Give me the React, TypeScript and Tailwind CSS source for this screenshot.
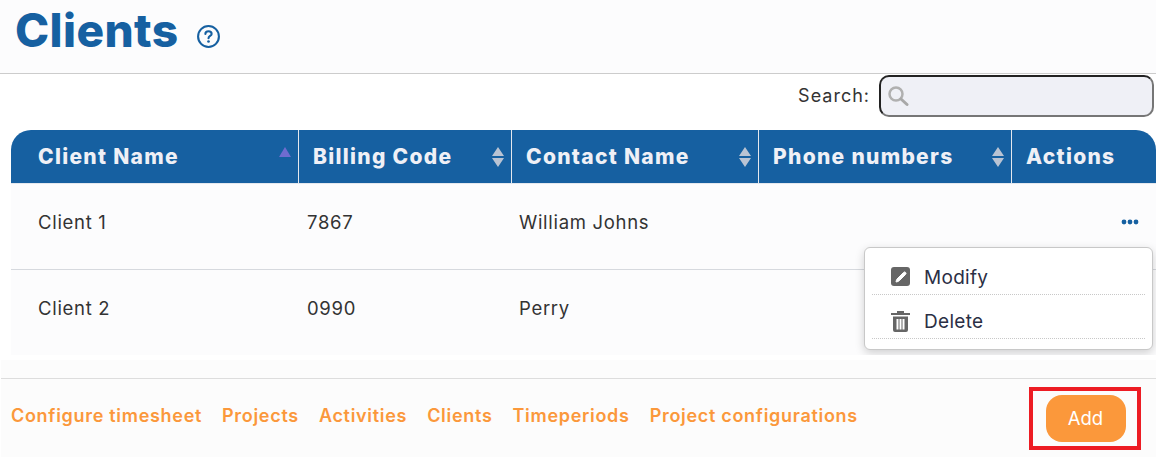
import { Pencil } from "lucide-react";

const font = "font-['Inter','Liberation_Sans',sans-serif]";

const columns = [
  { label: "Client Name", width: "w-[288px]", sort: "up" },
  { label: "Billing Code", width: "w-[213px]", sort: "both" },
  { label: "Contact Name", width: "w-[247px]", sort: "both" },
  { label: "Phone numbers", width: "w-[253px]", sort: "both" },
  { label: "Actions", width: "flex-1", sort: "none" },
];

const rows = [
  { name: "Client 1", code: "7867", contact: "William Johns", height: "h-[86px]" },
  { name: "Client 2", code: "0990", contact: "Perry", height: "h-[85px]" },
];

const links = ["Configure timesheet", "Projects", "Activities", "Clients", "Timeperiods", "Project configurations"];

function SortIcon({ sort }: { sort: string }) {
  if (sort === "none") return null;
  if (sort === "up") {
    return (
      <svg width="12" height="10" viewBox="0 0 12 10" className="absolute right-[7px] top-[17px]">
        <path d="M6 0 L12 10 L0 10 Z" fill="#6f6cd0" />
      </svg>
    );
  }
  return (
    <svg width="12" height="20" viewBox="0 0 12 20" className="absolute right-[7px] top-[17px]">
      <path d="M6 0 L12 9 L0 9 Z M0 11 L12 11 L6 20 Z" fill="#b9c3d3" />
    </svg>
  );
}

export default function App() {
  return (
    <div className={`${font} relative w-[1156px] h-[457px] overflow-hidden bg-white`}>
      {/* Title */}
      <div className="h-[74px] bg-[#fcfcfd] border-b border-[#cccccc] pl-[15px] flex items-start">
        <h1 className="text-[46px] leading-[60px] font-extrabold text-[#1660a1] tracking-[0.4px]">Clients</h1>
        <svg width="25" height="25" viewBox="0 0 24 24" className="ml-[17px] mt-[24px]" fill="none">
          <circle cx="12" cy="12" r="10" stroke="#1660a1" strokeWidth="2" />
          <path d="M9 9.6 C9 7.8 10.4 7 12 7 C13.7 7 15 8 15 9.5 C15 11.5 12 11.5 12 13.6" stroke="#1660a1" strokeWidth="2" strokeLinecap="round" />
          <circle cx="12" cy="16.8" r="1.3" fill="#1660a1" />
        </svg>
      </div>

      {/* Search */}
      <div className="h-[56px] flex items-start justify-end pr-[2px] pt-[1px]">
        <label className="text-[18px] leading-[42px] tracking-[1px] text-[#333333] mr-[9px]">Search:</label>
        <div className="w-[275px] h-[42px] rounded-[10px] border-2 border-t-[#222222] border-l-[#222222] border-r-[#767676] border-b-[#767676] bg-[#eff0f6] flex items-center pl-[6px]">
          <svg width="22" height="22" viewBox="0 0 22 22" fill="none">
            <circle cx="9" cy="9" r="6.5" stroke="#b0b0b0" strokeWidth="2.5" />
            <path d="M14 14 L20 19.5" stroke="#a8a8a8" strokeWidth="3" strokeLinecap="round" />
          </svg>
        </div>
      </div>

      {/* Table */}
      <div className="relative ml-[11px] overflow-hidden">
        <div className="h-[54px] flex bg-[#1660a1] rounded-t-[20px] border-b border-[#e4e8ee]">
          {columns.map((c, i) => (
            <div
              key={c.label}
              className={`${c.width} relative flex items-center text-[21px] font-extrabold tracking-[1.3px] text-[#eff0f6] ${i === 0 ? "pl-[27px]" : "pl-[14px]"} ${i < 4 ? "border-r border-[#e4e8ee]" : ""}`}
            >
              {c.label}
              <SortIcon sort={c.sort} />
            </div>
          ))}
        </div>
        {rows.map((r, i) => (
          <div key={r.name} className={`${r.height} flex items-center pb-[7px] bg-[#fcfcfd] text-[18.5px] tracking-[0.7px] text-[#333333] ${i === 0 ? "border-b border-[#d6d9de]" : ""}`}>
            <div className="w-[288px] pl-[27px]">{r.name}</div>
            <div className="w-[213px] pl-[8px]">{r.code}</div>
            <div className="w-[247px] pl-[7px]">{r.contact}</div>
            <div className="flex-1 flex justify-end pr-[17px]">
              {i === 0 && (
                <svg width="18" height="6" viewBox="0 0 18 6" className="-mt-[2px]">
                  <circle cx="3" cy="3" r="2.4" fill="#1660a1" />
                  <circle cx="9" cy="3" r="2.4" fill="#1660a1" />
                  <circle cx="15" cy="3" r="2.4" fill="#1660a1" />
                </svg>
              )}
            </div>
          </div>
        ))}

        {/* Actions menu, clipped by the table like the shadow in the picture */}
        <div className="absolute left-[853px] top-[117px] w-[289px] h-[103px] bg-white rounded-[6px] border border-[#c8c8c8] shadow-[0_3px_10px_rgba(0,0,0,0.18)] px-[7px] pt-[3px]">
          <div className="h-[44px] pt-[8px] flex items-center border-b border-dotted border-[#c8c8c8] pl-[19px] gap-[14px] text-[19px] tracking-[0.3px] text-[#2b2f45]">
            <span className="w-[19px] h-[19px] rounded-[3px] bg-[#666666] flex items-center justify-center">
              <Pencil size={12} color="white" fill="white" />
            </span>
            <span className="mt-[4px]">Modify</span>
          </div>
          <div className="h-[44px] pt-[8px] flex items-center border-b border-dotted border-[#c8c8c8] pl-[19px] gap-[14px] text-[19px] tracking-[0.3px] text-[#2b2f45]">
            <svg width="19" height="22" viewBox="0 0 19 22">
              <path d="M0 3 H6 V1 H13 V3 H19 V5 H0 Z" fill="#666666" />
              <path d="M2 6.5 H17 V20 a2 2 0 0 1 -2 2 H4 a2 2 0 0 1 -2 -2 Z M5.5 9 V19.5 H7.5 V9 Z M8.5 9 V19.5 H10.5 V9 Z M11.5 9 V19.5 H13.5 V9 Z" fill="#666666" fillRule="evenodd" />
            </svg>
            <span className="mt-[4px]">Delete</span>
          </div>
        </div>
      </div>

      {/* Footer */}
      <div className="mt-[5px] ml-[1px] h-[97px] bg-[#fcfcfc]">
        <div className="h-[19px] border-b border-[#dddddd]" />
        <div className="h-[77px] flex items-start justify-between pl-[10px] pr-[15px] pt-[8px]">
          <div className="flex gap-[20px] text-[18px] tracking-[0.7px] font-semibold text-[#fb983b] mt-[15px]">
            {links.map((l) => (
              <a key={l}>{l}</a>
            ))}
          </div>
          <div className="border-[4px] border-[#ed1c24] w-[112px] h-[63px] flex items-center justify-center">
            <button className="ml-[1px] w-[80px] h-[47px] rounded-[16px] bg-[#fb983b] text-white text-[18.5px]">Add</button>
          </div>
        </div>
      </div>
    </div>
  );
}
